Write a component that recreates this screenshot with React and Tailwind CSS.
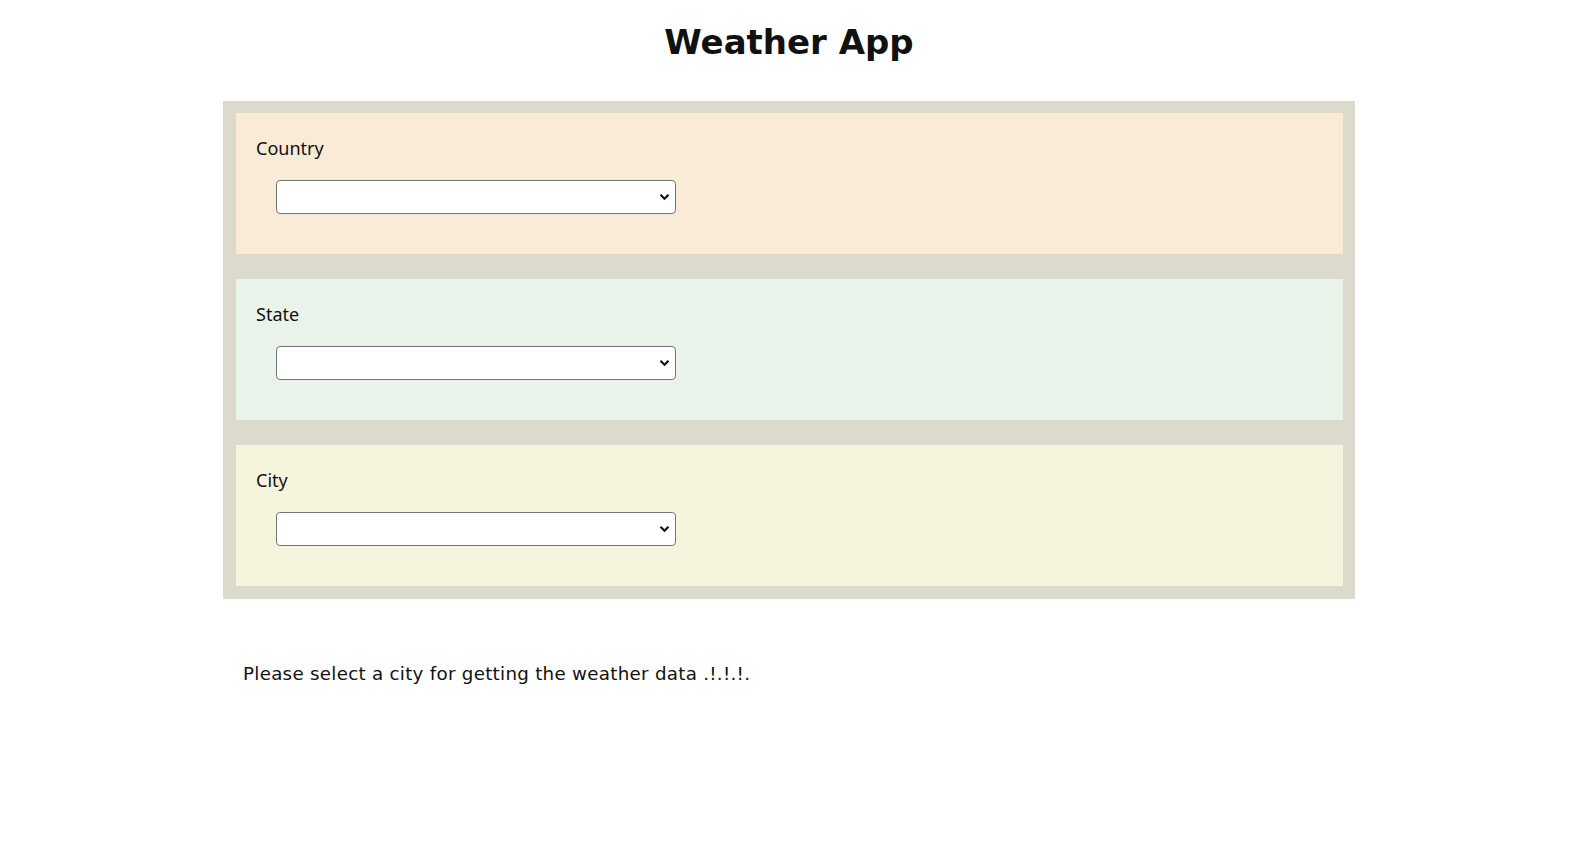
import React from 'react';

const panels = [
  { label: 'Country', bg: 'bg-[#faebd7]' },
  { label: 'State', bg: 'bg-[#e9f3ea]' },
  { label: 'City', bg: 'bg-[#f5f4dc]' },
];

const Dropdown = () => (
  <div className="relative ml-5 w-[400px]">
    <select className="block w-full h-[34px] appearance-none rounded-[4px] border border-[#767676] bg-white px-2 text-[15px]">
      <option value=""></option>
    </select>
    <svg
      className="pointer-events-none absolute right-[6px] top-[13px] w-[11px] h-[8px]"
      viewBox="0 0 11 8"
      fill="none"
    >
      <path d="M1.5 1.8 L5.5 5.8 L9.5 1.8" stroke="#111" strokeWidth="2.2" />
    </svg>
  </div>
);

const App = () => {
  return (
    <div className="min-h-screen bg-white text-[#111] font-['Noto_Sans',sans-serif]">
      <div className="w-[1578px]">
        <h1 className="pt-[16px] text-center text-[34px] leading-[52px] font-bold font-['DejaVu_Sans',sans-serif]">
          Weather App
        </h1>

        <div className="mx-auto mt-[33px] w-[1132px] bg-[#dcd9cd] pt-[12px] pb-[13px] pl-[13px] pr-[12px] flex flex-col gap-[25px]">
          {panels.map((p) => (
            <div key={p.label} className={`${p.bg} h-[141px] pl-5 pt-[23px]`}>
              <div className="text-[18px] leading-[24px]">{p.label}</div>
              <div className="mt-[20px]">
                <Dropdown />
              </div>
            </div>
          ))}
        </div>

        <p className="ml-[243px] mt-[62px] text-[18.25px] leading-[26px] tracking-[0.28px] font-['DejaVu_Sans',sans-serif]">
          Please select a city for getting the weather data .!.!.!.
        </p>
      </div>
    </div>
  );
};

export default App;
